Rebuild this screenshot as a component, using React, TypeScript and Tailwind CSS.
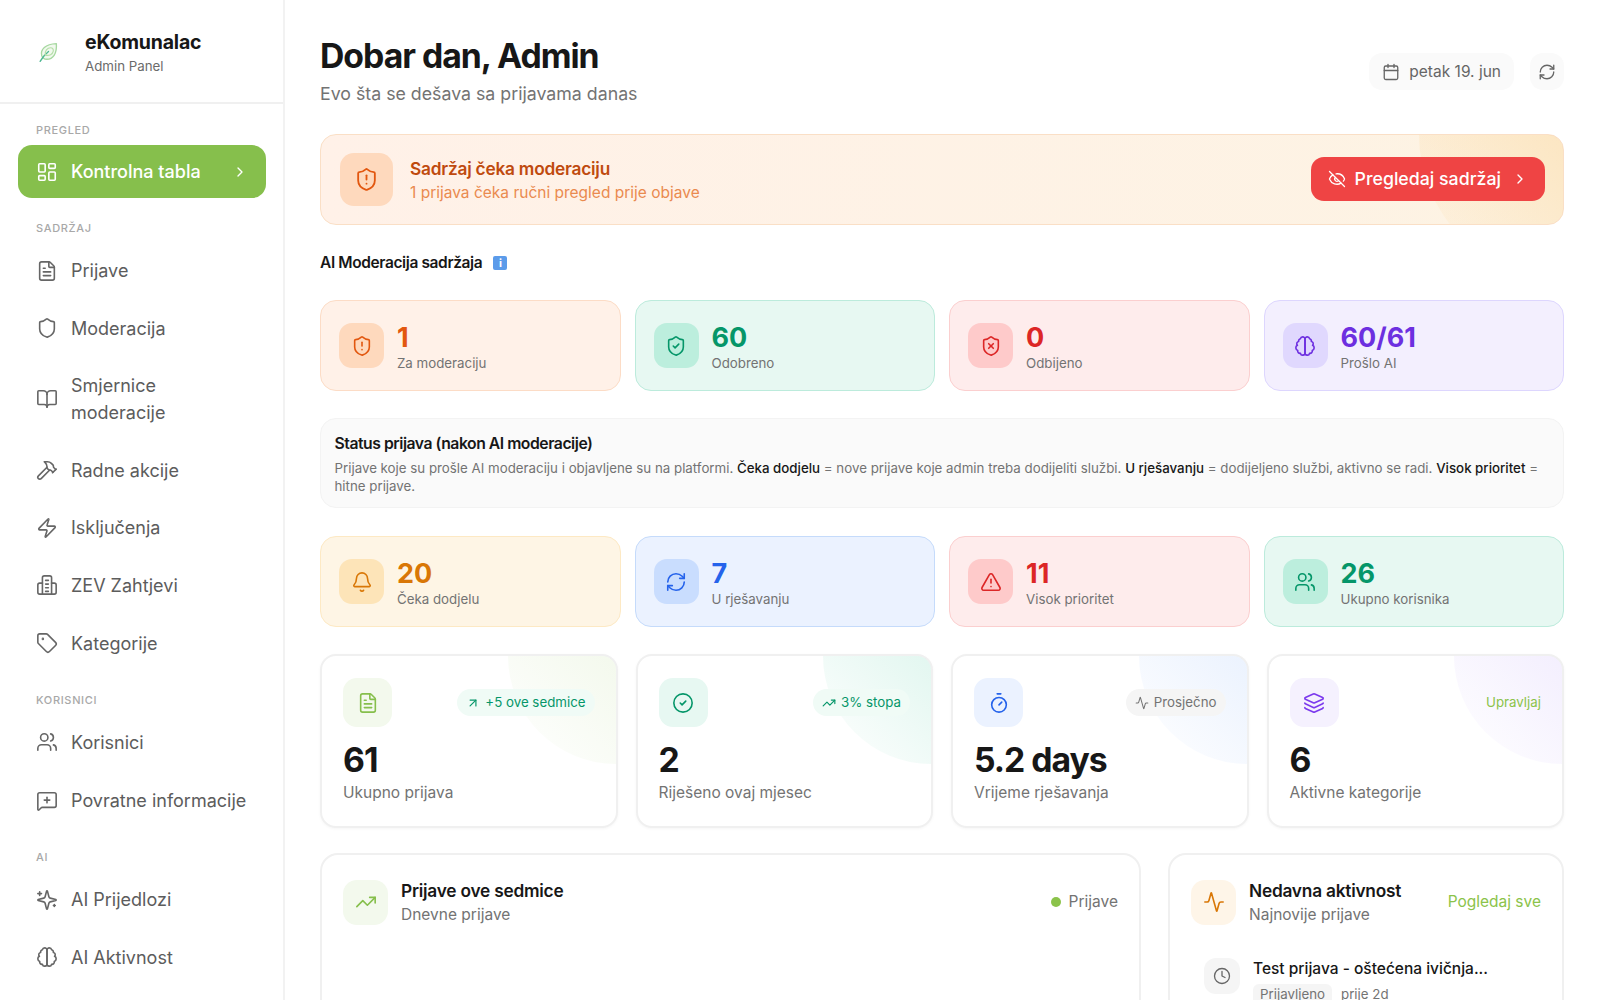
import React from "react";
import {
  Activity, ArrowUpRight, Bell, BookOpen, Calendar, ChevronRight, CircleCheck, Clock, EyeOff, FileText,
  Hammer, Layers, LayoutDashboard, MessageSquarePlus, RefreshCw, Shield, ShieldAlert, ShieldCheck,
  ShieldX, Tag, Timer, TrendingUp, TriangleAlert, Users, Zap,
} from "lucide-react";

type IconProps = { size?: number; strokeWidth?: number; className?: string };

function Logo() {
  return (
    <svg width="23" height="23" viewBox="0 0 22 22" fill="none" strokeLinecap="round" strokeLinejoin="round">
      <path d="M4.5 14C3 8 8 3 18.500 2.500c.8 10-3.500 15-9 15-2.500 0-4.300-1-5-3.500Z" stroke="#a6d8a0" strokeWidth="1.300" fill="#f1f9ee" />
      <path d="M3 19.500C5.500 15 8.500 12 11 10" stroke="#4db892" strokeWidth="1.300" />
      <path d="M8 13.500C7 9.500 10 6.500 13 6.500c2 0 3 1.500 2.500 3.500-.5 2.500-3.500 4.500-7.500 3.500Z" stroke="#b5dfa9" strokeWidth="1.100" />
    </svg>
  );
}

function Brain({ size = 24, strokeWidth = 2, className }: IconProps) {
  return (
    <svg width={size} height={size} viewBox="0 0 24 24" fill="none" stroke="currentColor" strokeWidth={strokeWidth} strokeLinecap="round" strokeLinejoin="round" className={className}>
      <path d="M9.5 2A2.5 2.5 0 0 1 12 4.5v15a2.5 2.5 0 0 1-4.960.44 2.5 2.5 0 0 1-2.960-3.080 3 3 0 0 1-.340-5.580 2.5 2.5 0 0 1 1.320-4.240 2.5 2.500 0 0 1 1.980-3A2.500 2.500 0 0 1 9.500 2Z" />
      <path d="M14.500 2A2.500 2.500 0 0 0 12 4.500v15a2.500 2.500 0 0 0 4.960.44 2.500 2.500 0 0 0 2.960-3.080 3 3 0 0 0 .34-5.580 2.500 2.500 0 0 0-1.320-4.240 2.500 2.500 0 0 0-1.980-3A2.500 2.500 0 0 0 14.500 2Z" />
    </svg>
  );
}

function SparkleIcon({ size = 24, strokeWidth = 2, className }: IconProps) {
  return (
    <svg width={size} height={size} viewBox="0 0 24 24" fill="none" stroke="currentColor" strokeWidth={strokeWidth} strokeLinecap="round" strokeLinejoin="round" className={className}>
      <g transform="matrix(-1 0 0 1 24 0)">
        <path d="M9.937 15.500A2 2 0 0 0 8.500 14.063l-6.135-1.582a.5.5 0 0 1 0-.962L8.500 9.936A2 2 0 0 0 9.937 8.500l1.582-6.135a.5.5 0 0 1 .963 0L14.063 8.500A2 2 0 0 0 15.500 9.937l6.135 1.581a.5.5 0 0 1 0 .964L15.500 14.063a2 2 0 0 0-1.437 1.437l-1.582 6.135a.5.5 0 0 1-.963 0z" />
        <path d="M20 3v4M22 5h-4M4 17v2M5 18H3" />
      </g>
    </svg>
  );
}

function ZevIcon({ size = 24, strokeWidth = 2, className }: IconProps) {
  return (
    <svg width={size} height={size} viewBox="0 0 24 24" fill="none" stroke="currentColor" strokeWidth={strokeWidth} strokeLinecap="round" strokeLinejoin="round" className={className}>
      <path d="M7 22V4a2 2 0 0 1 2-2h6a2 2 0 0 1 2 2v18" />
      <path d="M7 10H4a2 2 0 0 0-2 2v8a2 2 0 0 0 2 2h16a2 2 0 0 0 2-2v-8a2 2 0 0 0-2-2h-3" />
      <path d="M10.500 7h3M10.500 11h3M10.500 15h3M10.500 19h3" />
    </svg>
  );
}

function NavItem({ icon: Icon, label }: { icon: React.ElementType; label: React.ReactNode }) {
  return (
    <div className="flex min-h-[53px] items-center gap-[13px] whitespace-nowrap rounded-[14px] px-[18px] py-[13px] text-[18px] leading-[27px] text-[#5c5c5c]">
      <Icon size={22} strokeWidth={1.75} className="shrink-0 text-[#666666]" />
      <span>{label}</span>
    </div>
  );
}

function SectionLabel({ children }: { children: React.ReactNode }) {
  return <div className="mb-[7px] h-[18px] pl-[36px] text-[11px] font-medium leading-[18px] tracking-[0.06em] text-[#a8a8a8]">{children}</div>;
}

function Sidebar() {
  return (
    <aside className="w-[285px] shrink-0 border-r-2 border-[#f2f2f2] bg-white">
      <div className="flex h-[104px] items-center gap-[13px] border-b-2 border-[#f0f0f0] px-[27px] pt-[3px]">
        <div className="flex h-[45px] w-[45px] items-center justify-center pr-[2px]"><Logo /></div>
        <div>
          <div className="text-[19.500px] font-bold leading-[27px] tracking-[-0.01em] text-[#171717]">eKomunalac</div>
          <div className="text-[13.300px] leading-[20px] text-[#6b6b6b]">Admin Panel</div>
        </div>
      </div>
      <nav className="flex flex-col gap-[21px] pt-[17px]">
        <div>
          <SectionLabel>PREGLED</SectionLabel>
          <div className="ml-[18px] mr-[17px] -mt-[1px] flex h-[53px] items-center gap-[13px] rounded-[14px] bg-[#86bf4c] px-[18px] text-[18px] font-medium text-white">
            <LayoutDashboard size={22} strokeWidth={1.75} />
            <span className="flex-1">Kontrolna tabla</span>
            <ChevronRight size={16} strokeWidth={2} />
          </div>
        </div>
        <div>
          <SectionLabel>SADRŽAJ</SectionLabel>
          <div className="mx-[18px] flex flex-col gap-[4.600px]">
            <NavItem icon={FileText} label="Prijave" />
            <NavItem icon={Shield} label="Moderacija" />
            <NavItem icon={BookOpen} label={<>Smjernice<br />moderacije</>} />
            <NavItem icon={Hammer} label="Radne akcije" />
            <NavItem icon={Zap} label="Isključenja" />
            <NavItem icon={ZevIcon} label="ZEV Zahtjevi" />
            <NavItem icon={Tag} label="Kategorije" />
          </div>
        </div>
        <div>
          <SectionLabel>KORISNICI</SectionLabel>
          <div className="mx-[18px] flex flex-col gap-[5.500px]">
            <NavItem icon={Users} label="Korisnici" />
            <NavItem icon={MessageSquarePlus} label="Povratne informacije" />
          </div>
        </div>
        <div>
          <SectionLabel>AI</SectionLabel>
          <div className="mx-[18px] flex flex-col gap-[4.600px]">
            <NavItem icon={SparkleIcon} label="AI Prijedlozi" />
            <NavItem icon={Brain} label="AI Aktivnost" />
          </div>
        </div>
      </nav>
    </aside>
  );
}

type Mini = { icon: React.ElementType; value: string; label: string; card: string; box: string; text: string };

function MiniCard({ m }: { m: Mini }) {
  const Icon = m.icon;
  return (
    <div className={`flex h-[91px] items-center gap-[13px] rounded-[16px] border-[1.500px] px-[18px] ${m.card}`}>
      <div className={`flex h-[45px] w-[45px] shrink-0 items-center justify-center rounded-[13px] ${m.box} ${m.text}`}>
        <Icon size={22} strokeWidth={1.75} />
      </div>
      <div className="pt-[3px]">
        <div className={`text-[27px] font-bold leading-[31px] ${m.text}`}>{m.value}</div>
        <div className="text-[13.300px] leading-[20px] text-[#737373]">{m.label}</div>
      </div>
    </div>
  );
}

const ORANGE = { card: "bg-[#fff1e8] border-[#fcdcc6]", box: "bg-[#fed9bd]", text: "text-[#e2570f]" };
const EMERALD = { card: "bg-[#e7f8f2] border-[#bcebdc]", box: "bg-[#bceedd]", text: "text-[#059669]" };
const RED = { card: "bg-[#feecec] border-[#fbcfcf]", box: "bg-[#fecaca]", text: "text-[#dc2626]" };
const VIOLET = { card: "bg-[#f3effe] border-[#ddd6fe]", box: "bg-[#e0d8fe]", text: "text-[#6d2fe0]" };
const AMBER = { card: "bg-[#fef5e5] border-[#fde9c4]", box: "bg-[#fde4b8]", text: "text-[#d97706]" };
const BLUE = { card: "bg-[#ebf2ff] border-[#c5dbfb]", box: "bg-[#c9ddfe]", text: "text-[#2563eb]" };

const row1: Mini[] = [
  { icon: ShieldAlert, value: "1", label: "Za moderaciju", ...ORANGE },
  { icon: ShieldCheck, value: "60", label: "Odobreno", ...EMERALD },
  { icon: ShieldX, value: "0", label: "Odbijeno", ...RED },
  { icon: Brain, value: "60/61", label: "Prošlo AI", ...VIOLET },
];
const row2: Mini[] = [
  { icon: Bell, value: "20", label: "Čeka dodjelu", ...AMBER },
  { icon: RefreshCw, value: "7", label: "U rješavanju", ...BLUE },
  { icon: TriangleAlert, value: "11", label: "Visok prioritet", ...RED },
  { icon: Users, value: "26", label: "Ukupno korisnika", ...EMERALD },
];

type Big = { icon: React.ElementType; value: string; label: string; box: string; blob: string; right: React.ReactNode };

const pill = "flex h-[27px] items-center gap-[5px] rounded-full px-[9px] text-[13.300px]";

const bigs: Big[] = [
  {
    icon: FileText, value: "61", label: "Ukupno prijava", box: "bg-[#f3f9ed] text-[#86bf4c]", blob: "from-[#8bc34a]/10",
    right: <div className={`${pill} bg-[#f0fbf6] text-[#059669]`}><ArrowUpRight size={14} strokeWidth={2} /><span>+5 ove sedmice</span></div>,
  },
  {
    icon: CircleCheck, value: "2", label: "Riješeno ovaj mjesec", box: "bg-[#e7f8f2] text-[#059669]", blob: "from-[#10b981]/12",
    right: <div className={`${pill} bg-[#f0fbf6] text-[#059669]`}><TrendingUp size={14} strokeWidth={2} /><span>3% stopa</span></div>,
  },
  {
    icon: Timer, value: "5.2 days", label: "Vrijeme rješavanja", box: "bg-[#ebf2ff] text-[#2563eb]", blob: "from-[#3b82f6]/10",
    right: <div className={`${pill} bg-[#f5f5f5] text-[#737373]`}><Activity size={14} strokeWidth={1.75} /><span>Prosječno</span></div>,
  },
  {
    icon: Layers, value: "6", label: "Aktivne kategorije", box: "bg-[#f5f1fe] text-[#7c3aed]", blob: "from-[#8b5cf6]/10",
    right: <div className="text-[13.300px] text-[#8bc34a]">Upravljaj</div>,
  },
];

function BigCard({ b }: { b: Big }) {
  const Icon = b.icon;
  return (
    <div className="relative h-[174px] overflow-hidden rounded-[16px] border-2 border-[#f0f0f0] bg-white px-[21px] pt-[22px] shadow-[0_1px_3px_rgba(0,0,0,0.04)]">
      <div className={`absolute right-0 top-0 h-[108px] w-[108px] rounded-bl-full bg-gradient-to-bl to-transparent ${b.blob}`} />
      <div className="relative flex items-center justify-between">
        <div className={`flex h-[49px] w-[49px] items-center justify-center rounded-[14px] ${b.box}`}>
          <Icon size={22} strokeWidth={1.75} />
        </div>
        {b.right}
      </div>
      <div className="relative mt-[13px] text-[33.750px] font-bold leading-[40px] tracking-[-0.03em] text-[#171717]">{b.value}</div>
      <div className="relative mt-[1px] text-[15.500px] leading-[24px] text-[#737373]">{b.label}</div>
    </div>
  );
}

export default function App() {
  return (
    <div className="flex h-screen overflow-hidden bg-white font-['Inter',sans-serif]">
      <Sidebar />
      <main className="flex-1 overflow-hidden pl-[35px] pr-[36px] pt-[36px]">
        <header className="flex items-start justify-between">
          <div>
            <h1 className="text-[33.750px] font-bold leading-[40px] tracking-[-0.03em] text-[#171717]">Dobar dan, Admin</h1>
            <p className="mt-[3.500px] text-[17.750px] leading-[27px] text-[#737373]">Evo šta se dešava sa prijavama danas</p>
          </div>
          <div className="mt-[17px] flex items-center gap-[16px]">
            <div className="flex h-[37px] items-center gap-[9px] rounded-[13px] bg-[#fafafa] px-[13px] text-[15.500px] text-[#666666]">
              <Calendar size={18} strokeWidth={1.75} /> <span>petak 19. jun</span>
            </div>
            <div className="flex h-[37px] w-[34px] items-center justify-center rounded-[13px] bg-[#fafafa] text-[#666666]">
              <RefreshCw size={18} strokeWidth={1.75} />
            </div>
          </div>
        </header>

        <section className="relative mt-[27px] flex h-[91px] items-center justify-between overflow-hidden rounded-[16px] border-[1.500px] border-[#fadfc6] bg-gradient-to-r from-[#fff1e8] to-[#fdf3e3] pl-[19px] pr-[18px]">
          <div className="absolute right-0 top-0 h-[144px] w-[144px] rounded-bl-full bg-gradient-to-bl from-[#f59e0b]/15 to-transparent" />
          <div className="relative flex items-center gap-[17px]">
            <div className="flex h-[53px] w-[53px] items-center justify-center rounded-[14px] bg-[#fed9bd] text-[#e2570f]">
              <ShieldAlert size={25} strokeWidth={1.75} />
            </div>
            <div>
              <div className="text-[17.300px] font-semibold leading-[27px] tracking-[-0.013em] text-[#bf4a0e]">Sadržaj čeka moderaciju</div>
              <div className="text-[15.500px] leading-[22px] text-[#ea8a4f]">1 prijava čeka ručni pregled prije objave</div>
            </div>
          </div>
          <button className="relative flex h-[44px] items-center gap-[9px] rounded-[13px] bg-[#ef4444] px-[17px] text-[17.750px] font-medium text-white">
            <EyeOff size={18} strokeWidth={1.75} />
            <span>Pregledaj sadržaj</span>
            <ChevronRight size={16} strokeWidth={2} className="ml-[2px]" />
          </button>
        </section>

        <div className="mt-[28.500px] flex h-[20px] items-center gap-[11px] text-[15.500px] font-semibold tracking-[-0.025em] text-[#171717]">
          <span>AI Moderacija sadržaja</span>
          <span className="flex h-[14px] w-[14px] items-center justify-center rounded-[2px] bg-[#5b9bea] text-[11px] font-bold leading-none text-white">i</span>
        </div>

        <div className="mt-[27px] grid grid-cols-4 gap-[14px]">
          {row1.map((m) => <MiniCard key={m.label} m={m} />)}
        </div>

        <div className="mt-[27px] h-[90px] rounded-[16px] border-[1.500px] border-[#f3f3f3] bg-[#fafafa] px-[13.500px] pt-[14px]">
          <div className="text-[15.750px] font-semibold leading-[22px] tracking-[-0.03em] text-[#171717]">Status prijava (nakon AI moderacije)</div>
          <p className="mt-[4px] text-[13.300px] leading-[18px] text-[#737373]">
            Prijave koje su prošle AI moderaciju i objavljene su na platformi. <b className="font-medium text-[#171717]">Čeka dodjelu</b> = nove prijave koje admin treba dodijeliti službi. <b className="font-medium text-[#171717]">U rješavanju</b> = dodijeljeno službi, aktivno se radi. <b className="font-medium text-[#171717]">Visok prioritet</b> = hitne prijave.
          </p>
        </div>

        <div className="mt-[28px] grid grid-cols-4 gap-[14px]">
          {row2.map((m) => <MiniCard key={m.label} m={m} />)}
        </div>

        <div className="mt-[27px] grid grid-cols-4 gap-[18px]">
          {bigs.map((b) => <BigCard key={b.label} b={b} />)}
        </div>

        <div className="mt-[25px] grid grid-cols-[821px_396px] gap-[27px]">
          <div className="flex h-[200px] items-start justify-between rounded-t-[18px] border-2 border-[#f0f0f0] bg-white px-[21px] pt-[23.500px]">
            <div className="flex items-center gap-[13px]">
              <div className="flex h-[45px] w-[45px] items-center justify-center rounded-[14px] bg-[#f3f9ed] text-[#86bf4c]">
                <TrendingUp size={22} strokeWidth={1.75} />
              </div>
              <div>
                <div className="text-[17.300px] font-semibold leading-[24px] tracking-[-0.013em] text-[#171717]">Prijave ove sedmice</div>
                <div className="text-[15.500px] leading-[23px] text-[#737373]">Dnevne prijave</div>
              </div>
            </div>
            <div className="flex h-[45px] items-center gap-[8px] pt-[1px] text-[15.500px] text-[#737373]">
              <span className="h-[10px] w-[10px] rounded-full bg-[#8bc34a]" />
              <span>Prijave</span>
            </div>
          </div>
          <div className="h-[200px] rounded-t-[18px] border-2 border-[#f0f0f0] bg-white px-[21px] pt-[23.500px]">
            <div className="flex items-center justify-between">
              <div className="flex items-center gap-[13px]">
                <div className="flex h-[45px] w-[45px] items-center justify-center rounded-[14px] bg-[#fef5e8] text-[#d97706]">
                  <Activity size={22} strokeWidth={1.75} />
                </div>
                <div>
                  <div className="text-[17.300px] font-semibold leading-[24px] tracking-[-0.013em] text-[#171717]">Nedavna aktivnost</div>
                  <div className="text-[15.500px] leading-[23px] text-[#737373]">Najnovije prijave</div>
                </div>
              </div>
              <span className="text-[15.500px] text-[#8bc34a]">Pogledaj sve</span>
            </div>
            <div className="mt-[32px] ml-[13px] flex gap-[13px]">
              <div className="flex h-[36px] w-[36px] shrink-0 items-center justify-center rounded-[12px] bg-[#f5f5f5] text-[#666666]">
                <Clock size={18} strokeWidth={1.75} />
              </div>
              <div>
                <div className="text-[15.500px] font-medium leading-[22px] text-[#171717]">Test prijava - oštećena ivičnja...</div>
                <div className="mt-[4px] flex items-center gap-[9px] text-[13.300px] text-[#737373]">
                  <span className="rounded-[6px] bg-[#f5f5f5] px-[7px] py-[1px]">Prijavljeno</span>
                  <span>prije 2d</span>
                </div>
              </div>
            </div>
          </div>
        </div>
      </main>
    </div>
  );
}
